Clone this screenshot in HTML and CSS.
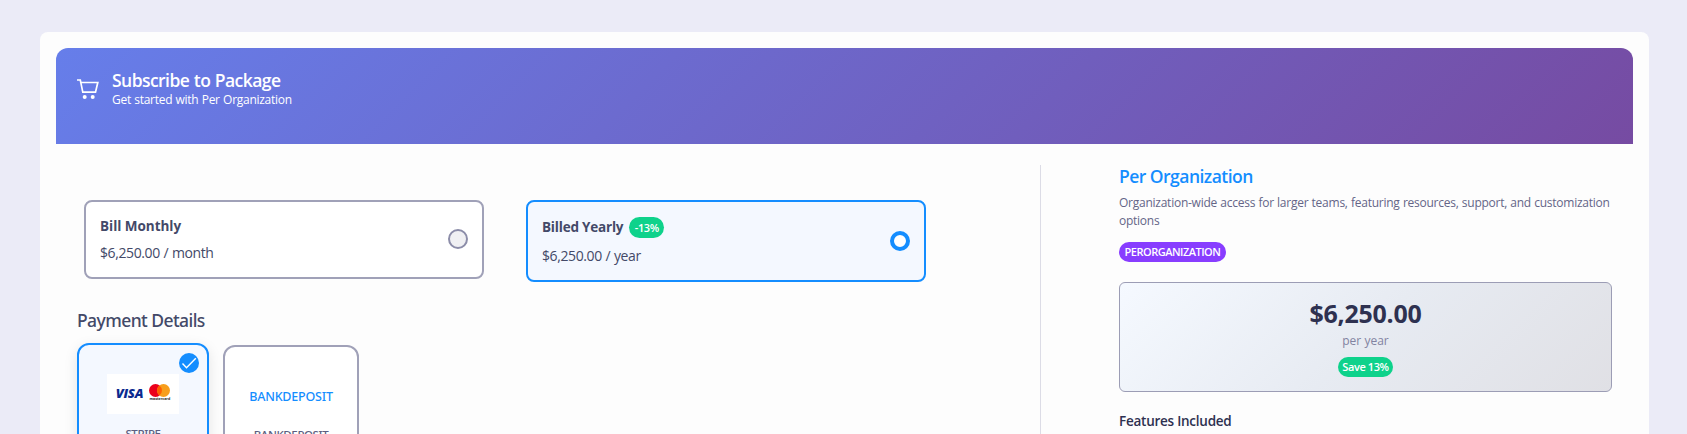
FILE: index.html
```html
<!DOCTYPE html>
<html lang="en">
<head>
<meta charset="utf-8">
<title>Subscribe to Package</title>
<link rel="stylesheet" href="styles.css">
</head>
<body>
<main class="panel">
  <header class="hero">
    <svg class="cart" width="24" height="24" viewBox="0 0 24 24" fill="none" stroke="#fff" stroke-width="1.7"><path d="M1 3h3.300l2.500 12.200h12.700L21.800 5.500H5"/><circle cx="8.700" cy="20" r="2" fill="#fff" stroke="none"/><circle cx="16.700" cy="20" r="2" fill="#fff" stroke="none"/></svg>
    <div>
      <h1 class="hero-title">Subscribe to Package</h1>
      <p class="hero-sub">Get started with Per Organization</p>
    </div>
  </header>
  <div class="columns">
    <section class="left">
      <div class="plans">
        <div class="plan">
          <div>
            <div class="plan-name monthly">Bill Monthly</div>
            <div class="plan-price">$6,250.00 / month</div>
          </div>
          <span class="radio"></span>
        </div>
        <div class="plan active">
          <div>
            <div class="plan-name yearly"><span>Billed Yearly</span><span class="badge off">-13%</span></div>
            <div class="plan-price">$6,250.00 / year</div>
          </div>
          <span class="radio on"></span>
        </div>
      </div>
      <h2 class="pay-title">Payment Details</h2>
      <div class="methods">
        <div class="method chosen">
          <svg class="check" width="20" height="20" viewBox="0 0 20 20"><circle cx="10" cy="10" r="10" fill="#148dff"/><path d="M3.500 10.500 7.500 14.700 16.800 5.300" fill="none" stroke="#fff" stroke-width="1.400"/></svg>
          <div class="logos">
            <span class="visa">VISA</span>
            <span class="mc"><svg width="21" height="13" viewBox="0 0 21 13"><circle cx="6.500" cy="6.500" r="6.500" fill="#eb001b"/><circle cx="14.500" cy="6.500" r="6.500" fill="#f79e1b"/><path d="M10.500 1.400a6.500 6.500 0 0 1 0 10.200a6.500 6.500 0 0 1 0-10.200z" fill="#ff5f00"/></svg><span class="mc-name">mastercard</span></span>
          </div>
          <div class="method-name stripe">STRIPE</div>
        </div>
        <div class="method bank">
          <div class="bank-logo">BANKDEPOSIT</div>
          <div class="method-name">BANKDEPOSIT</div>
        </div>
      </div>
    </section>
    <aside class="summary">
      <h2 class="sum-title">Per Organization</h2>
      <p class="sum-desc">Organization-wide access for larger teams, featuring resources, support, and customization options</p>
      <span class="badge tag">PERORGANIZATION</span>
      <div class="price-box">
        <div class="amount">$6,250.00</div>
        <div class="period">per year</div>
        <span class="badge save">Save 13%</span>
      </div>
      <h3 class="features">Features Included</h3>
    </aside>
  </div>
</main>
</body>
</html>
```
FILE: styles.css
```css
* { box-sizing: border-box; }
body { margin: 0; height: 434px; overflow: hidden; padding: 32px 38px 0 40px; background: #ebebf7; font-family: "Open Sans", "Noto Sans", sans-serif; color: #434968; }
h1, h2, h3, p { margin: 0; }
.panel { height: 402px; padding: 16px; overflow: hidden; background: #fdfdfd; border-radius: 8px 8px 0 0; }
.hero { display: flex; height: 96px; padding: 19px 20px; border-radius: 12px 12px 0 0; background: linear-gradient(135deg, #667eea 0%, #764ba2 100%); color: #fff; }
.cart { margin: 10px 12px 0 0; }
.hero-title { font-size: 17.5px; line-height: 26px; font-weight: 600; letter-spacing: -0.55px; word-spacing: 0.5px; white-space: nowrap; }
.hero-sub { font-size: 12px; line-height: 13px; letter-spacing: -0.28px; word-spacing: 0.5px; white-space: nowrap; }
.columns { display: flex; padding: 21px 20px 0 21px; height: 290px; }
.left { width: 963px; }
.plans { display: flex; align-items: flex-start; gap: 42px; padding: 35px 0 0 7px; }
.plan { display: flex; justify-content: space-between; align-items: center; width: 400px; height: 79px; border: 2px solid #a0a1b8; border-radius: 8px; padding: 0 14px 1px; background: #fff; white-space: nowrap; }
.plan.active { height: 82px; padding-bottom: 0; border-color: #148dff; background: #f4f8ff; }
.plan-name { font-weight: 700; font-size: 13.5px; line-height: 21px; letter-spacing: -0.2px; }
.plan-name.monthly { padding-top: 1px; letter-spacing: -0.03px; }
.plan-price { margin-top: 6px; font-size: 14px; line-height: 21px; letter-spacing: -0.4px; word-spacing: 0.5px; }
.monthly + .plan-price { margin-top: 5px; }
.active .plan-price { margin-top: 7px; }
.yearly { display: flex; align-items: center; gap: 6px; }
.badge { display: inline-flex; align-items: center; justify-content: center; border-radius: 11px; color: #fff; font-weight: 600; font-size: 11px; white-space: nowrap; }
.off { width: 35px; height: 21px; background: #0ed28b; letter-spacing: -0.4px; }
.radio { width: 20px; height: 20px; border: 2px solid #8c8da9; border-radius: 50%; background: #f0f0f3; }
.radio.on { border: 4px solid #148dff; background: #fff; }
.pay-title { margin-top: 25px; font-family: "Noto Sans", sans-serif; font-size: 17.500px; line-height: 26px; font-weight: 500; letter-spacing: -0.57px; }
.methods { display: flex; gap: 14px; margin-top: 10px; }
.method { width: 136px; height: 130px; margin-top: 2px; border: 2px solid #a0a1b8; border-radius: 12px; background: #fff; text-align: center; white-space: nowrap; }
.method.chosen { position: relative; width: 132px; margin-top: 0; border-color: #148dff; background: #f4f8ff; box-shadow: 0 4px 14px rgba(0, 0, 0, 0.1); }
.check { position: absolute; top: 8px; right: 8px; }
.logos { display: flex; align-items: center; justify-content: center; gap: 6px; width: 72px; height: 40px; margin: 29px auto 0 28px; padding-bottom: 3px; background: #fff; }
.visa { color: #0b2a8f; font: italic 800 13px/14px "Open Sans", sans-serif; letter-spacing: -0.2px; }
.mc { display: flex; flex-direction: column; align-items: center; width: 21px; }
.mc-name { font-size: 3.600px; line-height: 4px; color: #222; font-weight: 700; }
.method-name { font-family: "Noto Sans", sans-serif; font-size: 11.500px; line-height: 16px; font-weight: 500; letter-spacing: -0.4px; color: #5c5e80; }
.stripe { margin-top: 12px; }
.bank-logo { margin-top: 40px; font-family: "Noto Sans", sans-serif; font-size: 12.500px; line-height: 20px; color: #148dff; font-weight: 500; letter-spacing: -0.2px; }
.bank .method-name { margin-top: 20px; }
.summary { width: 573px; border-left: 1px solid #dcdce6; padding-left: 78px; }
.sum-title { margin-top: -1px; font-size: 17.500px; line-height: 24px; font-weight: 600; color: #148dff; letter-spacing: -0.53px; }
.sum-desc { margin-top: 6px; font-size: 12px; line-height: 18px; color: #646587; width: 493px; letter-spacing: -0.25px; word-spacing: 0.4px; }
.tag { margin-top: 12px; width: 107px; height: 20px; background: #883dff; letter-spacing: -0.5px; padding-bottom: 2px; }
.price-box { display: flex; flex-direction: column; align-items: center; margin-top: 20px; width: 493px; height: 110px; border: 1px solid #9c9db5; border-radius: 6px; background: linear-gradient(135deg, #f5f9ff 0%, #e7ebf2 50%, #e0e0e5 100%); }
.amount { margin-top: 14px; font-size: 25px; line-height: 32px; font-weight: 700; color: #2e3150; letter-spacing: -0.25px; }
.period { margin-top: 2px; font-size: 12px; line-height: 20px; color: #8283a1; }
.save { margin-top: 6px; width: 55px; height: 20px; background: #0ed28b; letter-spacing: -0.4px; padding-bottom: 1px; }
.features { margin-top: 19px; font-size: 13.500px; line-height: 20px; font-weight: 600; color: #2e3150; letter-spacing: -0.25px; }
```
